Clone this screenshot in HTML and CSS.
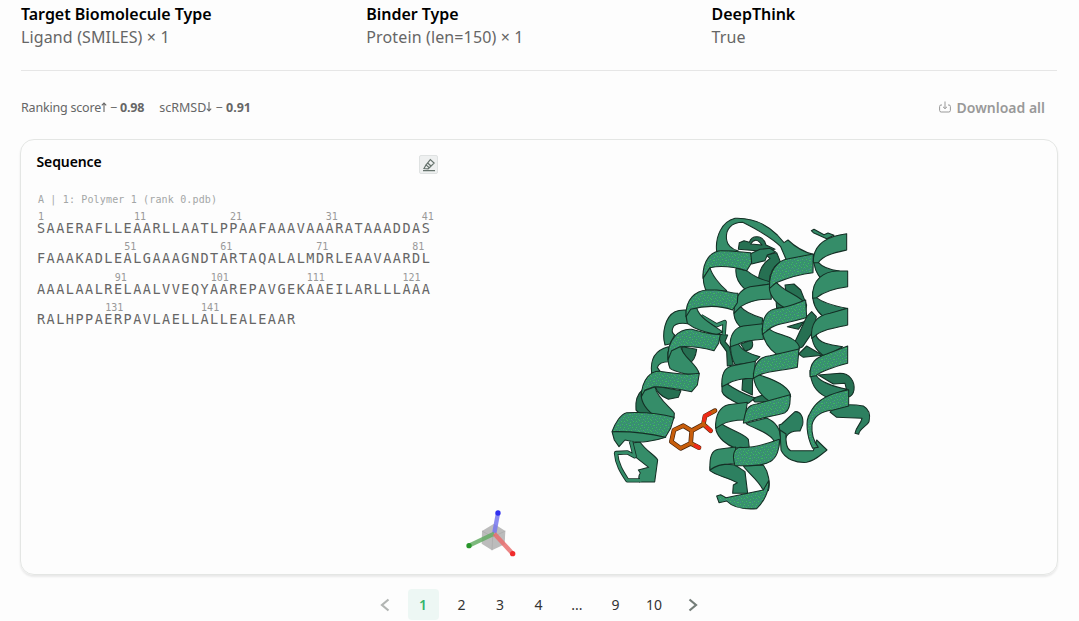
FILE: index.html
```html
<!DOCTYPE html>
<html lang="en">
<head>
<meta charset="utf-8">
<title>Binder results</title>
<link rel="stylesheet" href="styles.css">
</head>
<body>
<main class="page">
  <section class="summary">
    <div class="fact"><h3 class="fact-name">Target Biomolecule Type</h3><p class="fact-value">Ligand (SMILES) × 1</p></div>
    <div class="fact"><h3 class="fact-name">Binder Type</h3><p class="fact-value">Protein (len=150) × 1</p></div>
    <div class="fact"><h3 class="fact-name">DeepThink</h3><p class="fact-value">True</p></div>
  </section>
  <section class="metrics">
    <p class="scores"><span class="score ranking">Ranking score<svg class="arrow" viewBox="0 0 6 10"><path d="M3 10V1M.8 3.4L3 1l2.2 2.4"/></svg> − <b>0.98</b></span><span class="score">scRMSD<svg class="arrow" viewBox="0 0 6 10"><path d="M3 0v9M.8 6.6L3 9l2.2-2.4"/></svg> − <b>0.91</b></span></p>
    <button class="download"><svg class="download-icon" viewBox="0 0 12 12"><path d="M3 4H2Q.6 4 .6 5.5V9.4Q.6 11 2.2 11h7.6q1.6 0 1.6-1.6V5.5Q11.400 4 10 4H9M6 .5v7M4 5.800L6 7.7l2-1.900"/></svg><span class="download-text">Download all</span></button>
  </section>
  <section class="card">
    <div class="sequence">
      <header class="seq-head"><h4 class="seq-title">Sequence</h4>
        <button class="marker"><svg class="marker-icon" viewBox="0 0 14 14"><path d="M1 12.600h12M2 10.500l2-3.600 3.300 2.900-1.200 1zM4.100 6.800L8.300 1.600l3.800 3.500-4.800 4.700M6 5.200l3.200 3"/></svg></button>
      </header>
      <p class="polymer">A | 1: Polymer 1 (rank 0.pdb)</p>
      <div class="line"><div class="ruler"><span class="c1">1</span><span class="c11">11</span><span class="c21">21</span><span class="c31">31</span><span class="c41">41</span></div><p class="residues">SAAERAFLLEAARLLAATLPPAAFAAAVAAARATAAADDAS</p></div>
      <div class="line"><div class="ruler"><span class="c10">51</span><span class="c20">61</span><span class="c30">71</span><span class="c40">81</span></div><p class="residues">FAAAKADLEALGAAAGNDTARTAQALALMDRLEAAVAARDL</p></div>
      <div class="line"><div class="ruler"><span class="c9">91</span><span class="c19">101</span><span class="c29">111</span><span class="c39">121</span></div><p class="residues">AAALAALRELAALVVEQYAAREPAVGEKAAEILARLLLAAA</p></div>
      <div class="line"><div class="ruler"><span class="c8">131</span><span class="c18">141</span></div><p class="residues">RALHPPAERPAVLAELLALLEALEAAR</p></div>
    </div>
    <div class="viewer">
      <svg class="axes" viewBox="0 0 180 150">
        <path class="cube" d="M96 54l36-22 34 22-2 40-38 18-31-20z"/>
        <path class="cube-edge" d="M96 54l32 18 38-18M128 72l-2 40"/>
        <path class="axis-z" d="M133 60L144 0"/><circle class="end-z" cx="144" cy="0" r="8"/>
        <path class="axis-y" d="M133 62L57 98"/><circle class="end-y" cx="57" cy="98" r="8"/>
        <path class="axis-x" d="M133 62L188 122"/><circle class="end-x" cx="188" cy="122" r="8"/>
      </svg>
      <svg class="protein" viewBox="0 0 840 960">
        <defs><pattern id="grain" width="36" height="33" patternUnits="userSpaceOnUse">
          <rect width="36" height="33" fill="#37926d"/>
          <path fill="#3fb762" d="M0 3h3v3H0zM9 0h3v3H9zM18 6h3v3h-3zM27 3h3v3h-3zM6 12h3v3H6zM15 15h6v3h-6zM30 12h3v3h-3zM0 21h3v3H0zM12 24h3v3h-3zM24 21h3v3h-3zM33 27h3v3h-3zM6 30h3v3H6zM21 30h3v3h-3z"/>
          <path fill="#438c86" d="M3 6h3v3H3zM12 9h6v3h-6zM24 0h3v3h-3zM33 6h3v3h-3zM0 15h3v3H0zM24 12h3v6h-3zM9 18h3v3H9zM18 21h3v3h-3zM3 27h3v3H3zM27 27h3v3h-3zM15 30h3v3h-3z"/>
        </pattern></defs>
        <!-- rear coils -->
        <g class="dark">
          <path d="M415 148L418 128L432 122L448 127C455 105 488 102 498 135L525 148L470 152Z"/>
          <path class="hole" d="M452 132Q467 108 486 135Z"/>
          <path d="M498 165L530 158L541 185C520 200 508 220 508 245L475 240C478 205 495 185 510 175Z"/>
          <path d="M555 255L582 252L602 270L618 310L560 290ZM528 300L560 320L530 325ZM562 380L612 365L595 388Z"/>
          <path d="M585 425L620 350L635 335L649 350L642 390L608 440L592 448ZM596 462L620 438L668 466L610 472Z"/>
          <path d="M422 432L455 420C463 440 455 450 435 452ZM428 538L458 533L457 585L426 570ZM455 596L522 574L535 605L465 606Z"/>
          <path d="M245 440L290 448C287 470 278 485 268 488C255 475 245 460 245 440M165 558L243 572L235 592L205 598C185 590 170 575 165 558M108 630C105 600 115 580 127 570C128 600 140 620 165 648L120 642Z"/>
          <path d="M355 403L383 405L375 425L388 440L400 495L382 498L380 455L362 430Z"/>
          <path d="M655 525L720 520C750 520 765 545 762 570C760 582 755 588 745 592L735 550L700 552Z"/>
        </g>
        <!-- upper loop -->
        <g class="mid">
          <path d="M350 155C345 110 365 65 405 55C460 53 500 73 532 105L552 128L564 120C590 145 615 157 640 163L638 178L560 182L542 140C515 113 480 93 428 67C395 67 375 87 380 120C382 135 395 147 415 153Z"/>
          <path class="strand-edge" d="M303 348L350 376L374 366L371 404"/><path class="strand" d="M303 348L350 376L374 366L371 404"/>
        </g>
        <!-- middle helix -->
        <g class="low">
          <path d="M450 162L480 148L510 145L527 156L502 165L495 182L455 192Z"/>
          <path d="M408 205L440 212C455 225 485 240 510 245L508 252L435 268C415 250 405 230 408 205"/>
          <path d="M402 330L422 320C435 338 465 348 488 355L486 374L420 380C405 365 400 350 402 330"/>
          <path d="M392 430L415 430C425 455 460 465 480 470L462 487L405 494C395 475 390 455 392 430"/>
          <path d="M366 550L382 552C400 565 440 585 465 594L445 610L420 614C395 600 370 590 366 575Z"/>
          <path d="M348 672L366 672C390 690 430 700 445 718L448 744L405 744C380 735 355 715 348 690Z"/>
          <path d="M330 800C350 792 380 792 405 795L435 815L443 880L398 880L400 855L412 848C380 832 345 825 330 812Z"/>
        </g>
        <g class="mid">
          <path d="M402 340C402 290 420 268 450 260L512 252L514 298C480 296 445 305 422 320Z"/>
          <path d="M391 440C388 405 405 382 430 378L488 371L490 418C455 420 430 424 415 432Z"/>
          <path d="M366 560C363 520 375 503 395 498L466 484L462 535C425 535 400 540 382 552Z"/>
          <path d="M347 685C345 645 360 620 385 614L442 607L434 660C405 660 380 665 365 674Z"/>
          <path d="M330 810C328 770 335 752 355 748L407 741L405 792C375 790 350 794 330 810Z"/>
        </g>
        <!-- centre helix -->
        <g class="mid">
          <path d="M508 260L530 248C550 275 600 285 620 315L617 330L555 324C530 310 508 290 508 260"/>
          <path d="M486 385L505 385C530 408 585 405 598 440L595 458L530 463C505 445 488 420 486 385"/>
          <path d="M460 520L478 525C510 535 570 555 572 590L555 604L510 605C480 585 460 560 460 520"/>
          <path d="M437 670L500 654C525 665 541 685 542 715L535 742L495 748L522 722C505 695 465 688 437 670"/>
          <path d="M430 798L490 795C505 815 512 850 505 872L488 868C475 840 445 820 430 798"/>
        </g>
        <g class="front">
          <path d="M509 265C505 210 535 180 565 176L640 162L639 218C600 222 560 235 528 248Z"/>
          <path d="M487 403C485 345 505 328 535 325C565 322 590 310 617 300L620 352C575 370 525 366 498 395Z"/>
          <path d="M460 535C460 490 480 470 510 467L597 447L592 502C550 512 505 512 478 525Z"/>
          <path d="M430 670C435 635 440 615 470 612L570 584C572 610 568 630 555 638C515 650 470 655 430 670"/>
          <path d="M405 797C395 765 402 745 420 742C460 745 500 732 538 718C540 745 530 775 510 785C490 798 450 798 405 797"/>
          <path d="M350 888L362 884L378 893L490 870L506 842C510 870 490 908 470 926C430 929 398 922 380 903L357 908Z"/>
        </g>
        <!-- left helix -->
        <g class="mid">
          <path d="M310 235C308 218 312 205 330 203C335 225 360 255 380 272L320 275C313 262 310 250 310 235Z"/>
          <path d="M195 435C185 400 195 350 225 335C240 328 250 330 262 330L264 371C240 368 222 372 218 385C214 395 220 402 224 405L210 432Z"/>
          <path d="M155 520C150 480 165 450 205 440L207 485C185 485 175 492 172 502L180 514Z"/>
          <path d="M259 330L290 318C290 350 340 375 368 396L350 404C320 397 290 392 262 370C258 355 257 345 259 330Z"/>
          <path d="M204 455L242 438C245 470 290 490 297 520L290 532C260 520 225 517 210 505C202 485 203 465 204 455Z"/>
          <path d="M125 575L165 560C170 595 215 625 223 640L222 655L160 645C135 625 120 600 125 575"/>
          <path d="M90 730L120 726C140 755 165 765 173 780L164 846L119 846Q113 830 121 819L115 810L146 802L105 770Z"/>
          <path d="M36 695L110 690L197 712C160 725 120 728 100 725L75 720L57 740L43 720Z"/>
          <path class="strand-edge" d="M93 724L104 769L82 757L48 759C50 792 66 817 82 841L120 841"/><path class="strand" d="M93 724L104 769L82 757L48 759C50 792 66 817 82 841L124 841"/>
        </g>
        <g class="front">
          <path d="M309 235C307 180 335 152 365 152C395 152 425 156 452 158L455 188L440 212C400 200 365 196 330 203Z"/>
          <path d="M258 350C255 295 290 272 320 270L350 270C375 272 395 280 414 280L412 308L398 330C365 318 320 315 272 328Z"/>
          <path d="M204 480C200 415 240 385 275 388C310 397 335 405 361 403L356 430L342 452C315 445 275 438 240 440L215 452Z"/>
          <path d="M124 590C125 535 155 512 180 514C220 520 260 527 298 520L292 555L275 575C240 568 200 560 162 560L135 570Z"/>
          <path d="M36 695C45 670 62 642 80 638C130 636 180 640 222 652L212 685L196 712C150 700 90 694 36 695"/>
        </g>
        <!-- right helix and tail -->
        <g class="low">
          <path d="M640 165L655 187C670 205 695 210 718 213L668 240C650 225 640 205 640 165"/>
          <path d="M638 275L650 293C670 310 705 318 740 325L670 350C645 330 636 305 638 275"/>
          <path d="M635 395L648 405C655 430 690 435 728 440L675 470C645 450 635 430 635 395"/>
          <path d="M630 510L650 528C665 550 705 560 742 568L680 592C645 575 632 550 630 510"/>
          <path d="M537 675L545 672L585 635C600 633 612 650 608 674L600 693C585 692 568 695 560 708L545 740Z"/>
          <path d="M690 636C710 612 755 612 790 618C806 627 812 645 807 665C800 680 778 685 776 703L765 700C768 680 783 672 786 655L710 652Z"/>
        </g>
        <g class="mid">
          <path d="M634 92L642 88L672 104L684 99L702 106L680 116L640 98Z"/>
          <path d="M540 690L558 702C557 725 561 748 572 752L640 752L650 720L681 750C660 765 650 780 620 787C590 789 555 778 543 750Z"/>
          <path d="M640 188C638 130 685 108 740 101L740 150C705 158 670 165 655 188Z"/>
          <path d="M638 295C634 235 675 215 710 213L743 213L743 260C705 265 670 275 650 293Z"/>
          <path d="M635 415C630 360 660 345 690 340L743 325L743 375C700 385 660 391 645 408Z"/>
        </g>
        <g class="front">
          <path d="M630 530C628 485 650 472 680 462L743 438L743 490C705 500 670 510 648 527Z"/>
          <path d="M638 745C620 710 615 660 630 640C645 605 680 585 720 575L746 569L746 618L700 630C665 632 640 650 636 675C634 700 642 725 655 742Z"/>
        </g>
        <!-- ligand -->
        <g class="ligand">
          <path class="ligand-edge" d="M222 690L250 677L275 692L272 730L242 745L214 725ZM275 692L310 673L332 692M310 673L315 648L345 632M272 730L297 743"/>
          <path class="ligand-bond" d="M222 690L250 677L275 692L272 730L242 745L214 725ZM275 692L310 673L332 692M310 673L315 648L345 632M272 730L297 743"/>
          <path class="oxygen" d="M321 682L332 692M312 661L315 648L329 640M286 737L297 743"/>
        </g>
      </svg>
    </div>
  </section>
  <nav class="pager">
    <a class="page-item prev"><svg class="chevron" viewBox="0 0 10 14"><path d="M8.500 1.500L2 7l6.500 5.500"/></svg></a>
    <a class="page-item active">1</a><a class="page-item">2</a><a class="page-item">3</a><a class="page-item">4</a><a class="page-item">...</a><a class="page-item">9</a><a class="page-item">10</a>
    <a class="page-item next"><svg class="chevron" viewBox="0 0 10 14"><path d="M1.500 1.500L8 7l-6.500 5.500"/></svg></a>
  </nav>
</main>
</body>
</html>
```
FILE: styles.css
```css
* { box-sizing: border-box; }
body { margin: 0; height: 621px; overflow: hidden; background: #fdfdfd; color: #000; font-family: "Noto Sans", "Open Sans", sans-serif; }
h3, h4, p { margin: 0; }
button { border: 0; padding: 0; background: none; font: inherit; }
.page { padding: 3px 22px 0 21px; }
.summary { display: grid; grid-template-columns: repeat(3, 345.3px); height: 68px; border-bottom: 1px solid #e6e6e6; }
.fact-name { font-size: 16px; line-height: 23px; font-weight: 600; letter-spacing: -.03px; white-space: nowrap; }
.fact-value { font-size: 16px; line-height: 23px; letter-spacing: .13px; color: #666; }
.metrics { display: flex; justify-content: space-between; align-items: center; height: 68px; padding: 4px 12px 0 0; }
.scores { display: flex; gap: 15px; padding-top: 1px; font-size: 12.5px; line-height: 18px; color: #666; }
.score { white-space: nowrap; }
.ranking { letter-spacing: -.2px; }
.arrow { width: 6px; height: 10px; fill: none; stroke: #666; stroke-width: 1.1; }
.download { display: flex; align-items: center; gap: 6px; font-size: 14px; font-weight: 600; color: #999; }
.download-icon { width: 12px; height: 12px; fill: none; stroke: #999; stroke-width: 1; }
.card { display: flex; width: 1038px; height: 436px; margin-left: -1px; border: 1px solid #e4e6e4; border-radius: 14px; box-shadow: 0 2px 2px #e9e9e9; }
.sequence { width: 432px; padding: 12px 15px 0 16px; }
.seq-head { display: flex; justify-content: space-between; height: 38px; }
.seq-title { margin-left: -.5px; font-size: 14px; line-height: 20px; font-weight: 600; letter-spacing: -.1px; }
.marker { display: grid; place-items: center; width: 19px; height: 19px; margin-top: 3px; border: 1px solid #dfe2e2; border-radius: 2px; background: #eef0f0; }
.marker-icon { width: 14px; height: 14px; fill: none; stroke: #66736d; stroke-width: 1.2; }
.polymer { height: 21px; padding-left: 1px; font: 10px/20px "DejaVu Sans Mono", monospace; letter-spacing: .16px; color: #a3a6a6; }
.line { height: 30.4px; }
.ruler { display: grid; grid-template-columns: repeat(41, 9.6px); height: 9px; padding-left: 1px; font: 10px/12px "DejaVu Sans Mono", monospace; color: #999; }
.ruler span { width: 0; grid-row: 1; }
.c1 { grid-column: 1; } .c8 { grid-column: 8; } .c9 { grid-column: 9; } .c10 { grid-column: 10; }
.c11 { grid-column: 11; } .c18 { grid-column: 18; } .c19 { grid-column: 19; } .c20 { grid-column: 20; }
.c21 { grid-column: 21; } .c29 { grid-column: 29; } .c30 { grid-column: 30; } .c31 { grid-column: 31; }
.c39 { grid-column: 39; } .c40 { grid-column: 40; } .c41 { grid-column: 41; }
.residues { font: 13.5px/17px "DejaVu Sans Mono", monospace; letter-spacing: 1.49px; color: #666; white-space: nowrap; }
.viewer { position: relative; flex: 1; }
.axes { position: absolute; left: -3px; top: 373px; width: 60px; height: 50px; overflow: visible; }
.cube { fill: #bcbcbc; }
.cube-edge { fill: none; stroke: #a9a9a9; stroke-width: 2; }
.axis-x, .axis-y, .axis-z { fill: none; stroke-width: 13; opacity: .85; }
.axis-x { stroke: #e96e6e; } .axis-y { stroke: #65ab65; } .axis-z { stroke: #7777ed; }
.end-x { fill: #f02b2b; } .end-y { fill: #28962b; } .end-z { fill: #3030f0; }
.protein { position: absolute; left: 147px; top: 60px; width: 280px; height: 320px; }
.protein path { stroke-linejoin: round; }
.dark path, .low path, .mid path, .front path { stroke: #142f25; stroke-width: 3.2; }
.dark path { fill: #267052; }
.low path { fill: #2d8060; }
.mid path { fill: #358d69; }
.front path { fill: url(#grain); }
.dark path.hole { fill: #fdfdfd; }
.mid path.strand-edge { fill: none; stroke-width: 13; }
.mid path.strand { fill: none; stroke: #358d69; stroke-width: 8; }
.ligand path { fill: none; stroke-linecap: round; }
.ligand-edge { stroke: #442008; stroke-width: 14; }
.ligand-bond { stroke: #c75d0b; stroke-width: 10; }
.oxygen { stroke: #ed2a18; stroke-width: 11; }
.pager { display: flex; justify-content: center; gap: 7.5px; margin: 14px 0 0 -1px; font-size: 14px; color: #333; }
.page-item { display: grid; place-items: center; width: 31px; height: 31px; border-radius: 4px; }
.active { background: #edf7f4; color: #35b56c; font-weight: 600; }
.chevron { width: 10px; height: 14px; fill: none; stroke: #747d79; stroke-width: 2.2; }
.prev .chevron { stroke: #b2b5b3; }
```
